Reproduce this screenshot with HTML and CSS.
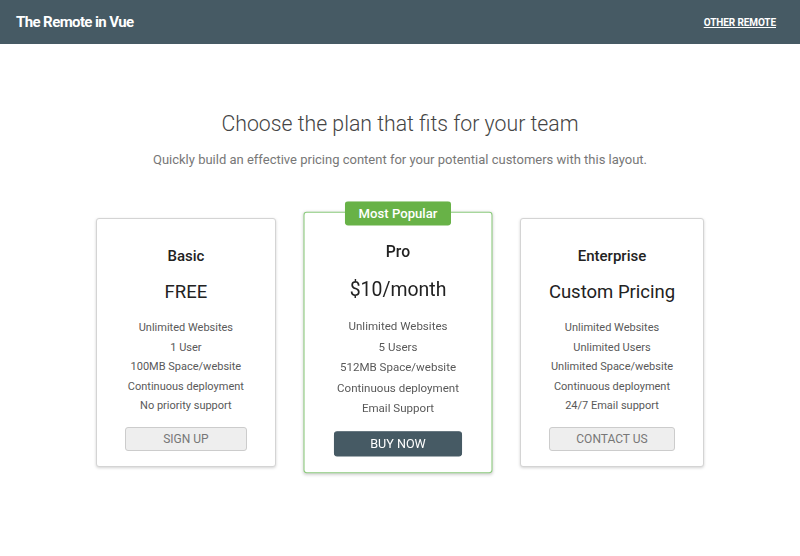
FILE: index.html
```html
<!DOCTYPE html>
<html lang="en">
<head>
<meta charset="utf-8">
<title>The Remote in Vue</title>
<link rel="stylesheet" href="styles.css">
</head>
<body>
<header class="topbar">
  <div class="brand">The Remote in Vue</div>
  <a class="nav-link" href="#">OTHER REMOTE</a>
</header>
<main class="pricing">
  <h1 class="title">Choose the plan that fits for your team</h1>
  <p class="subtitle">Quickly build an effective pricing content for your potential customers with this layout.</p>
  <div class="plans">
    <div class="plan">
      <div class="plan-name">Basic</div>
      <div class="plan-price">FREE</div>
      <ul class="features">
        <li>Unlimited Websites</li>
        <li>1 User</li>
        <li>100MB Space/website</li>
        <li>Continuous deployment</li>
        <li>No priority support</li>
      </ul>
      <button class="btn btn-light">SIGN UP</button>
    </div>
    <div class="plan plan-popular">
      <div class="badge">Most Popular</div>
      <div class="plan-name">Pro</div>
      <div class="plan-price">$10/month</div>
      <ul class="features">
        <li>Unlimited Websites</li>
        <li>5 Users</li>
        <li>512MB Space/website</li>
        <li>Continuous deployment</li>
        <li>Email Support</li>
      </ul>
      <button class="btn btn-dark">BUY NOW</button>
    </div>
    <div class="plan">
      <div class="plan-name">Enterprise</div>
      <div class="plan-price">Custom Pricing</div>
      <ul class="features">
        <li>Unlimited Websites</li>
        <li>Unlimited Users</li>
        <li>Unlimited Space/website</li>
        <li>Continuous deployment</li>
        <li>24/7 Email support</li>
      </ul>
      <button class="btn btn-light">CONTACT US</button>
    </div>
  </div>
</main>
</body>
</html>
```
FILE: styles.css
```css
* { box-sizing: border-box; }
body {
  margin: 0;
  min-height: 556px;
  font-family: Roboto, "Liberation Sans", Arial, sans-serif;
  color: #333;
  background: #fff;
}
.topbar {
  height: 44px;
  background: #465a64;
  display: flex;
  align-items: center;
  justify-content: space-between;
  padding: 0 24px 0 16px;
}
.brand {
  color: #fff;
  font-size: 15px;
  font-weight: 700;
  letter-spacing: -0.6px;
}
.nav-link {
  color: #fff;
  font-size: 10px;
  font-weight: 700;
  letter-spacing: -0.1px;
  text-decoration: underline;
}
.pricing {
  text-align: center;
  padding: 67px 0 60px;
}
.title {
  margin: 0;
  font-size: 21.25px;
  line-height: 26px;
  font-weight: 300;
  color: #444;
}
.subtitle {
  margin: 14px 0 0;
  font-size: 13px;
  line-height: 18px;
  color: #777;
}
.plans {
  display: flex;
  justify-content: center;
  align-items: flex-start;
  gap: 32px;
  margin-top: 49px;
}
.plan {
  position: relative;
  border: 1px solid #d4d4d4;
  border-radius: 3px;
  box-shadow: 0 1px 3px rgba(0,0,0,0.18);
  padding: 27px 28px 15px;
  background: #fff;
  display: flex;
  flex-direction: column;
  align-items: stretch;
}
.plan-popular {
  border-color: #8ccb7d;
  transform: scale(1.05);
}
.badge {
  position: absolute;
  top: -11px;
  left: 50%;
  transform: translateX(-50%);
  background: #68b247;
  color: #fff;
  font-size: 12.5px;
  font-weight: 500;
  line-height: 23px;
  padding: 0 13px;
  border-radius: 3px;
  white-space: nowrap;
}
.plan-name {
  font-size: 15px;
  font-weight: 500;
  line-height: 20px;
  color: #222;
}
.plan-price {
  margin-top: 14px;
  font-size: 18.5px;
  line-height: 24px;
  color: #222;
  white-space: nowrap;
}
.features {
  list-style: none;
  margin: 14px 0 0;
  padding: 0;
  font-size: 11px;
  line-height: 19.6px;
  color: #595959;
  white-space: nowrap;
}
.btn {
  margin-top: 11px;
  height: 24px;
  min-width: 122px;
  border-radius: 3px;
  font-family: inherit;
  font-size: 12px;
  cursor: pointer;
  padding: 0;
}
.btn-light {
  background: #eee;
  border: 1px solid #ccc;
  color: #777;
}
.btn-dark {
  background: #465a64;
  border: 1px solid #465a64;
  color: #fff;
}
```
